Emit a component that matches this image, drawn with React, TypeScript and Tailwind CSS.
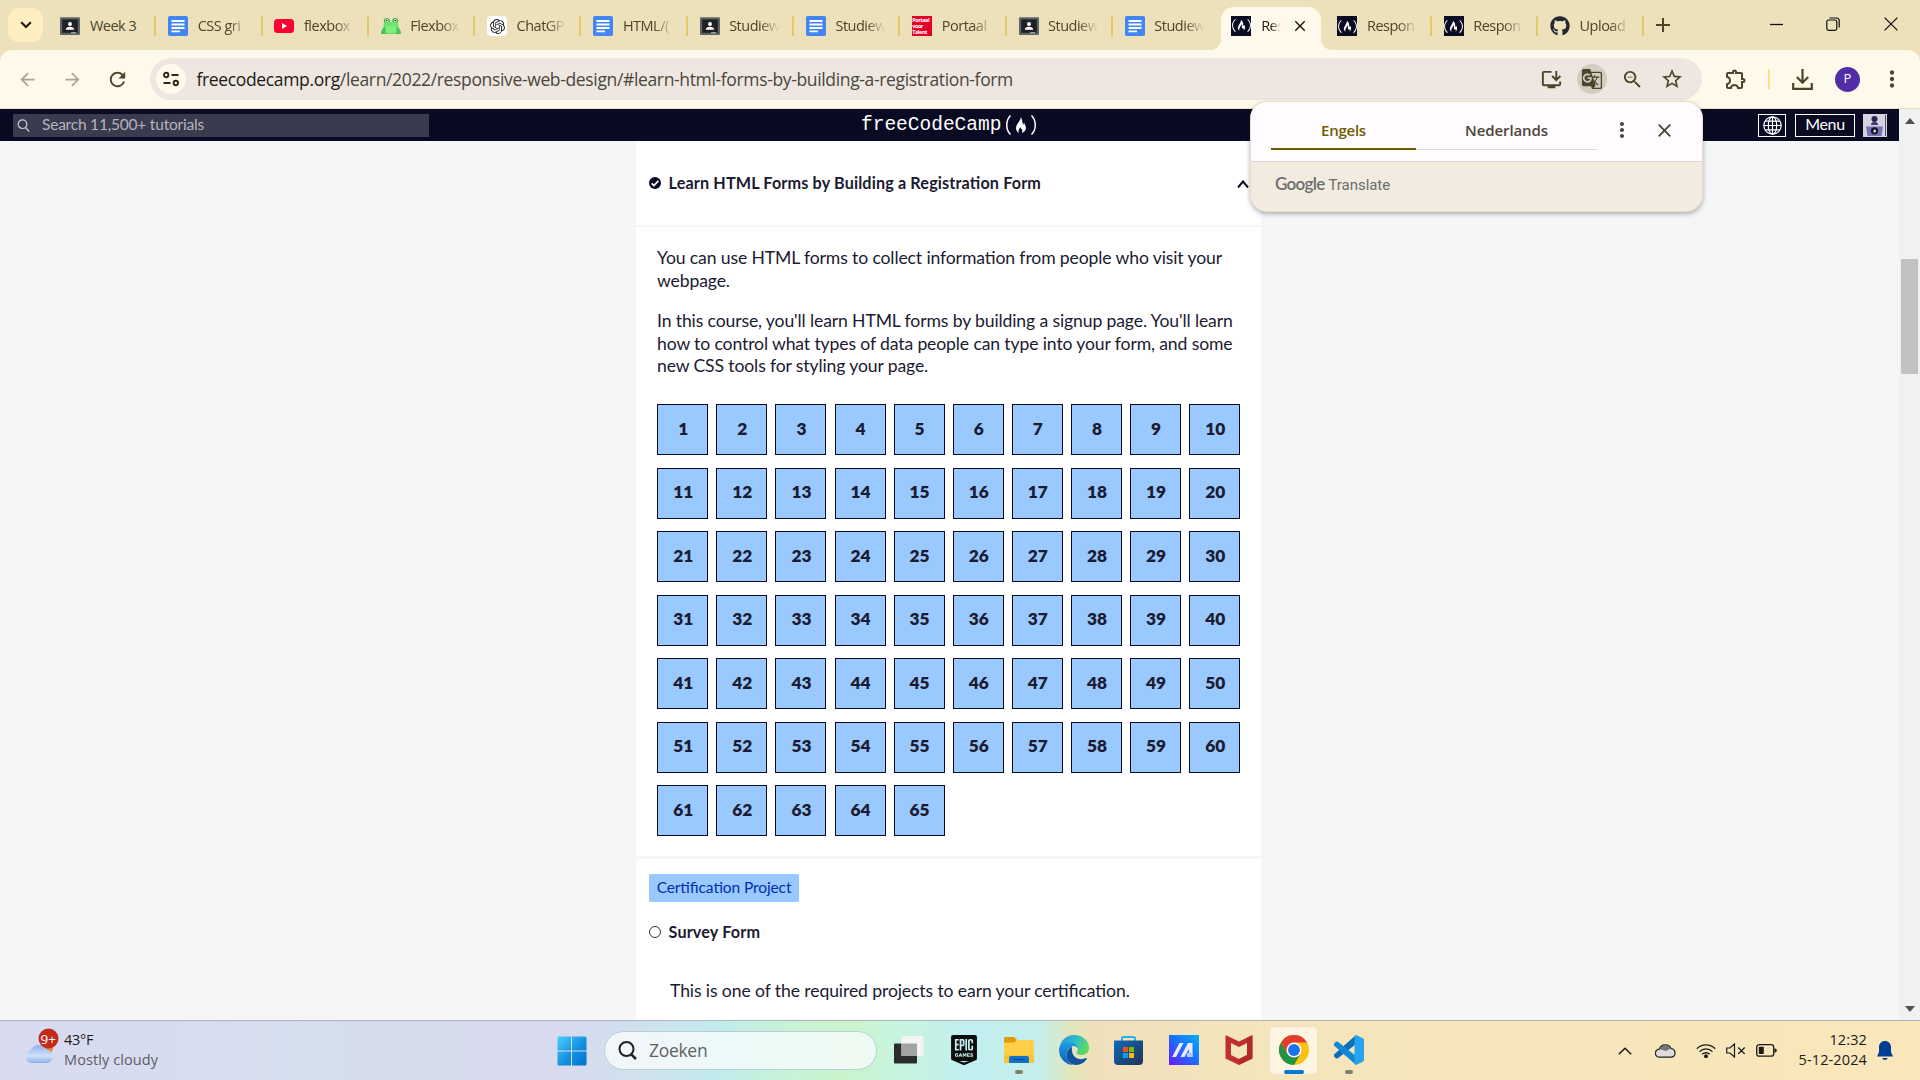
import React from "react";
import { FaFreeCodeCamp, FaGithub, FaYoutube } from "react-icons/fa";
import { SiEpicgames, SiOpenai } from "react-icons/si";
import {
  MdArrowBack,
  MdArrowForward,
  MdClose,
  MdGTranslate,
  MdInstallDesktop,
  MdMoreVert,
  MdOutlineExtension,
  MdRefresh,
  MdStarOutline,
  MdZoomOut,
} from "react-icons/md";

const UI = "font-['Open_Sans','Noto_Sans',sans-serif]";

function Classroom() {
  return (
    <svg width="20" height="20" viewBox="0 0 20 20">
      <rect x="0" y="1.3" width="20" height="17.6" rx="1" fill="#5f6368" />
      <rect x="2.2" y="3.4" width="15.6" height="13.4" fill="#202124" />
      <circle cx="10" cy="8" r="2" fill="#fff" />
      <path d="M5.8 13.8c0-2.2 2-3 4.200-3s4.200.8 4.200 3z" fill="#fff" />
      <rect x="11" y="16" width="5" height="1.500" fill="#9aa0a6" />
    </svg>
  );
}

function Docs() {
  return (
    <svg width="20" height="20" viewBox="0 0 20 20">
      <rect width="20" height="20" rx="1.800" fill="#4285f4" />
      <path d="M3.500 5h13M3.500 8.500h13M3.500 12h13M3.500 15.400h8.500" stroke="#fff" strokeWidth="1.800" />
    </svg>
  );
}

function Frog() {
  return (
    <svg width="20" height="20" viewBox="0 0 20 20">
      <circle cx="5.800" cy="5" r="3" fill="#3fae49" />
      <circle cx="14.200" cy="5" r="3" fill="#3fae49" />
      <circle cx="5.800" cy="4.600" r="1.500" fill="#fff" />
      <circle cx="14.200" cy="4.600" r="1.500" fill="#fff" />
      <circle cx="5.800" cy="4.600" r=".8" fill="#222" />
      <circle cx="14.200" cy="4.600" r=".8" fill="#222" />
      <rect x="2.500" y="5.800" width="15" height="8" rx="3.500" fill="#6fe36f" />
      <path d="M0 18c0-4 2-6.500 4-7l12 0c2 .5 4 3 4 7z" fill="#4cc356" />
      <rect x="4.500" y="10" width="11" height="7.500" rx="2" fill="#7bf07a" />
    </svg>
  );
}

function Fcc() {
  return (
    <div className="flex size-5 items-center justify-center bg-[#0a0a23] text-white">
      <FaFreeCodeCamp size={19} />
    </div>
  );
}

function Portaal() {
  return (
    <div className="flex size-5 flex-col justify-center bg-[#e4002b] font-['Open_Sans',sans-serif] text-[5.500px] leading-[6px] font-bold tracking-[-0.450px] text-white">
      <span>Portaal</span>
      <span>voor</span>
      <span>Talent</span>
    </div>
  );
}

function Youtube() {
  return (
    <svg width="20" height="20" viewBox="0 0 20 20">
      <rect y="3" width="20" height="14" rx="3.500" fill="#ff0033" />
      <path d="M8 7v6l5-3z" fill="#fff" />
    </svg>
  );
}

function Gpt() {
  return (
    <div className="flex size-5 items-center justify-center rounded bg-white text-[#222]">
      <SiOpenai size={15} />
    </div>
  );
}

type TabInfo = { icon: React.ReactNode; label: string; active?: boolean; first?: boolean; sep?: boolean };

const tabs: TabInfo[] = [
  { icon: <Classroom />, label: "Week 3", first: true, sep: true },
  { icon: <Docs />, label: "CSS gri", sep: true },
  { icon: <Youtube />, label: "flexbox", sep: true },
  { icon: <Frog />, label: "Flexbox", sep: true },
  { icon: <Gpt />, label: "ChatGP", sep: true },
  { icon: <Docs />, label: "HTML/(", sep: true },
  { icon: <Classroom />, label: "Studiew", sep: true },
  { icon: <Docs />, label: "Studiew", sep: true },
  { icon: <Portaal />, label: "Portaal", sep: true },
  { icon: <Classroom />, label: "Studiew", sep: true },
  { icon: <Docs />, label: "Studiew" },
  { icon: <Fcc />, label: "Res", active: true },
  { icon: <Fcc />, label: "Respon", sep: true },
  { icon: <Fcc />, label: "Respon", sep: true },
  { icon: <FaGithub size={20} color="#24292f" />, label: "Upload", sep: true },
];

function Tab({ tab }: { tab: TabInfo }) {
  if (tab.active) {
    return (
      <div className="relative z-10 flex h-[43px] w-[106.300px] shrink-0 items-center">
        <div className="absolute top-0 -left-[3px] h-[44px] w-[100px] rounded-t-[13px] bg-[#fff9ec]" />
        <div className="absolute bottom-0 -left-[15px] h-3 w-3 bg-[radial-gradient(circle_at_0_0,transparent_12px,#fff9ec_12.500px)]" />
        <div className="absolute bottom-0 left-[97px] h-3 w-3 bg-[radial-gradient(circle_at_100%_0,transparent_12px,#fff9ec_12.500px)]" />
        <div className="relative flex items-center pb-[6px] pl-[7px]">
          {tab.icon}
          <span className="ml-2.5 w-[20px] whitespace-nowrap text-[#1f1c10] [mask-image:linear-gradient(to_right,#000_50%,transparent)]">
            {tab.label}
          </span>
          <MdClose size={18} className="ml-[10px] text-[#1f1c10]" />
        </div>
      </div>
    );
  }
  return (
    <div className={`flex h-[43px] w-[106.300px] shrink-0 items-center pb-[5px] ${tab.first ? "pl-[5px]" : "pl-[7px]"}`}>
      {tab.icon}
      <span
        className={
          tab.first
            ? "ml-2.5 w-[51.400px] whitespace-nowrap text-[#4b4629]"
            : "ml-[9.500px] w-[49.900px] whitespace-nowrap text-[#4b4629] [mask-image:linear-gradient(to_right,#000_62%,transparent)]"
        }
      >
        {tab.label}
      </span>
      {tab.sep && <div className="ml-[13px] h-5 w-[2px] rounded bg-[#e2c869]" />}
    </div>
  );
}

function TabStrip() {
  return (
    <div className={`flex h-[50px] items-start bg-[#ece1bb] pt-[7px] text-[14.500px] tracking-[-0.500px] ${UI}`}>
      <div className="mt-px ml-2 flex h-[34px] w-[35px] shrink-0 items-center justify-center rounded-[11px] bg-[#ffefc0]">
        <svg width="12" height="8" viewBox="0 0 12 8" fill="none" stroke="#1f1c10" strokeWidth="2.200">
          <path d="M1.200 1.200 6 6l4.800-4.800" />
        </svg>
      </div>
      <div className="ml-[11.900px] flex">
        {tabs.map((t, i) => (
          <Tab key={i} tab={t} />
        ))}
      </div>
      <svg className="mt-[11px] ml-[7.100px] shrink-0" width="14" height="14" viewBox="0 0 14 14" stroke="#4b4629" strokeWidth="2">
        <path d="M7 0v14M0 7h14" />
      </svg>
      <div className="mt-[10px] mr-[22px] ml-auto flex items-center">
        <svg width="14" height="14" viewBox="0 0 14 14" stroke="#111" strokeWidth="1.300">
          <path d="M0 7.500h13" />
        </svg>
        <svg className="ml-[42px]" width="14" height="14" viewBox="0 0 14 14" fill="none" stroke="#111" strokeWidth="1.200">
          <rect x=".8" y="3" width="10" height="10.300" rx="1.800" />
          <path d="M3.500 1h7a2.500 2.500 0 0 1 2.700 2.500v7" />
        </svg>
        <svg className="ml-[44px]" width="14" height="14" viewBox="0 0 14 14" stroke="#111" strokeWidth="1.300">
          <path d="M.6.600l12.800 12.800M13.400.6.600 13.400" />
        </svg>
      </div>
    </div>
  );
}

function AddressBar() {
  return (
    <div className="bg-[#ece1bb]">
      <div className="flex h-[59px] items-center rounded-t-[12px] border-b border-[#e4dfc9] bg-[#fff9ec]">
        <MdArrowBack size={21} className="ml-[17px] shrink-0 text-[#aaa597]" />
        <MdArrowForward size={21} className="ml-[24px] shrink-0 text-[#aaa597]" />
        <MdRefresh size={23} className="ml-[23px] shrink-0 text-[#4b4629]" />
        <div className="ml-[21px] flex h-[42px] w-[1552px] shrink-0 items-center rounded-full bg-[#eee6e0]">
          <div className="ml-[6px] flex size-[30px] shrink-0 items-center justify-center rounded-full bg-[#fff9ec]">
            <svg width="16" height="16" viewBox="0 0 16 16" fill="none" stroke="#2b2818" strokeWidth="1.900">
              <circle cx="3.200" cy="4" r="2.200" />
              <path d="M8.500 4h7M.5 12h7" />
              <circle cx="12.800" cy="12" r="2.200" />
            </svg>
          </div>
          <div className={`ml-[10.500px] text-[17.500px] tracking-[-0.350px] whitespace-nowrap text-[#4a473c] ${UI}`}>
            <span className="text-[#1c1b16]">freecodecamp.org</span>
            /learn/2022/responsive-web-design/#learn-html-forms-by-building-a-registration-form
          </div>
          <div className="mr-[18px] ml-auto flex items-center text-[#4b4629]">
            <MdInstallDesktop size={23} />
            <div className="ml-[14px] flex size-[30px] items-center justify-center rounded-full bg-[#d3ccc0]">
              <MdGTranslate size={22} />
            </div>
            <MdZoomOut size={23} className="ml-[14px]" />
            <MdStarOutline size={24} className="ml-[16px]" />
          </div>
        </div>
        <MdOutlineExtension size={24} className="ml-[22px] shrink-0 text-[#4b4629]" />
        <div className="ml-[20px] h-5 w-[2px] bg-[#f8e287]" />
        <svg className="ml-[22px] shrink-0" width="21" height="21" viewBox="0 0 21 21" fill="none" stroke="#4b4629" strokeWidth="2.200">
          <path d="M10.500 0v13.500M4.800 8l5.700 5.700L16.200 8M1.200 14v5.800h18.600V14" />
        </svg>
        <div className={`ml-[22px] flex size-[25px] shrink-0 items-center justify-center rounded-full bg-[#512da8] text-[13px] text-white ${UI}`}>
          P
        </div>
        <MdMoreVert size={26} className="ml-[19px] shrink-0 text-[#4b4629]" />
      </div>
    </div>
  );
}

function SiteNav() {
  return (
    <div className="flex h-8 w-[1899px] items-center bg-[#0a0a23] font-[Lato,sans-serif]">
      <div className="ml-[13px] flex h-[23px] w-[416px] shrink-0 items-center bg-[#3b3b4f]">
        <svg className="ml-1" width="13" height="13" viewBox="0 0 13 13" fill="none" stroke="#d0d0d5" strokeWidth="1.200">
          <circle cx="5.500" cy="5.200" r="4.300" />
          <path d="m8.500 8.500 3.600 4" />
        </svg>
        <span className="ml-[12px] text-[15.500px] tracking-[-0.210px] text-[#b5b5bd]">Search 11,500+ tutorials</span>
      </div>
      <div className="ml-[432px] flex h-8 w-[180px] shrink-0 items-center text-white">
        <span className="mt-px font-['Liberation_Mono',monospace] text-[19.500px] leading-none">freeCodeCamp</span>
        <svg width="38" height="22" viewBox="0 0 38 22" fill="none" stroke="#fff" strokeWidth="1.500" className="shrink-0">
          <path d="M9.500 1.500C4.500 6.500 4.500 15.500 9.500 20.500M30.500 1.500C35.500 6.500 35.500 15.500 30.500 20.500" />
          <path
            d="M19.500 3c1 3-4.500 7-4.500 11 0 2.500 1.500 4.200 3.200 5-1.500-2.500 0-4.500 1.400-5.800 0 1.500 1 1.700 1.500 2.600.5.900.2 2.200-.3 3.200 2-.7 4.200-2.500 4.200-5.100 0-2.300-1.500-3.300-1.800-5.200-.7.600-.8 1.300-.7 2.200C21 9.500 22 6 19.500 3z"
            fill="#fff"
            stroke="none"
          />
        </svg>
      </div>
      <div className="mr-[12px] ml-auto flex h-[23px] items-stretch">
        <div className="flex w-[28px] items-center justify-center border border-white">
          <svg width="19" height="19" viewBox="0 0 19 19" fill="none" stroke="#fff" strokeWidth="1.200">
            <circle cx="9.500" cy="9.500" r="8.700" />
            <ellipse cx="9.500" cy="9.500" rx="4.200" ry="8.700" />
            <path d="M9.500 1v17M1 9.500h17M2.200 5.200h14.600M2.200 13.800h14.600" />
          </svg>
        </div>
        <div className="ml-[9px] flex w-[60px] items-center justify-center border border-white pb-[2px] text-[16px] leading-none tracking-[-0.300px] text-white">
          Menu
        </div>
        <div className="ml-2 w-6 bg-[#d6d2e0]">
          <svg width="24" height="23" viewBox="0 0 24 23">
            <circle cx="11.500" cy="5" r="3" fill="#26264d" />
            <path d="M8 11c0-2 1-3 3.500-3s3.500 1 3.500 3z" fill="#3b3b6b" />
            <path d="M3 12.500h17l-1.500 9.500H4.500z" fill="#7472b3" />
            <circle cx="11.500" cy="16.800" r="3.600" fill="#15152f" />
            <path d="M10.300 18.300c0-1.500 1.200-1.700 1.200-3.200 1.300 1 1.400 2.200 1.200 3.200z" fill="#fff" />
            <path d="M22.500 1v21" stroke="#55506b" />
          </svg>
        </div>
      </div>
    </div>
  );
}

function Steps() {
  return (
    <div className="mt-[26.800px] ml-[21.200px] grid grid-cols-[repeat(10,51px)] gap-x-[8.120px] gap-y-[12.500px]">
      {Array.from({ length: 65 }, (_, i) => (
        <div
          key={i}
          className="flex h-[51px] items-center justify-center border border-[#0a0a23] bg-[#99c9ff] pb-[2px] pl-px text-[17.300px] font-extrabold text-[#1b1b32]"
        >
          {i + 1}
        </div>
      ))}
    </div>
  );
}

function Content() {
  return (
    <div className="flex h-[879px] w-[1899px] justify-center overflow-hidden bg-[#f5f6f7] pr-[2px] font-[Lato,sans-serif] text-[#1b1b32] [font-feature-settings:'liga']">
      <div className="w-[625px]">
        <div className="h-[715px] bg-white">
          <div className="flex h-[86px] items-center border-b-2 border-[#f5f6f7] pr-[12px] pl-[13px]">
            <svg width="12" height="12" viewBox="0 0 12 12">
              <circle cx="6" cy="6" r="6" fill="#0a0a23" />
              <path d="m2.600 6.300 2.300 2.200 4.500-4.600" stroke="#fff" strokeWidth="1.700" fill="none" />
            </svg>
            <span className="ml-[7.500px] text-[16.200px] font-bold tracking-[0.140px] whitespace-nowrap">
              Learn HTML Forms by Building a Registration Form
            </span>
            <svg className="mt-[2px] ml-auto" width="12" height="8" viewBox="0 0 12 8" fill="none" stroke="#0a0a23" strokeWidth="2">
              <path d="M1 7.500 6 1.500l5 6" />
            </svg>
          </div>
          <div className="mt-[20px] ml-[21px] text-[17.600px] leading-[22.500px] tracking-[-0.130px] whitespace-nowrap">
            <p>
              You can use HTML forms to collect information from people who visit your
              <br />
              webpage.
            </p>
            <p className="mt-[18px]">
              In this course, you'll learn HTML forms by building a signup page. You'll learn
              <br />
              how to control what types of data people can type into your form, and some
              <br />
              new CSS tools for styling your page.
            </p>
          </div>
          <Steps />
        </div>
        <div className="mt-[3px] h-[200px] bg-white pt-[15px]">
          <div className="ml-[13px] flex h-[28px] w-[150px] items-center justify-center bg-[#99c9ff] text-[15.500px] tracking-[-0.100px] whitespace-nowrap text-[#002ead]">
            Certification Project
          </div>
          <div className="mt-[19px] ml-[13px] flex items-center">
            <svg width="12" height="12" viewBox="0 0 12 12" fill="none">
              <circle cx="6" cy="6" r="5.500" stroke="#1b1b32" strokeWidth=".9" />
            </svg>
            <span className="ml-[7.500px] text-[16.200px] leading-[22px] font-bold tracking-[0.150px]">Survey Form</span>
          </div>
          <p className="mt-[36px] ml-[34px] text-[17.600px] leading-[24px] tracking-[-0.110px] whitespace-nowrap">
            This is one of the required projects to earn your certification.
          </p>
        </div>
      </div>
    </div>
  );
}

function Scrollbar() {
  return (
    <div className="flex w-[21px] flex-col items-center bg-[#f1f1f1]">
      <svg className="mt-[9px]" width="10" height="6" viewBox="0 0 10 6">
        <path d="M0 6h10L5 0z" fill="#505050" />
      </svg>
      <div className="mt-[135px] h-[115px] w-[17px] bg-[#c1c1c1]" />
      <svg className="mt-auto mb-[8px]" width="10" height="6" viewBox="0 0 10 6">
        <path d="M0 0h10L5 6z" fill="#505050" />
      </svg>
    </div>
  );
}

function TranslatePopup() {
  return (
    <div className={`absolute top-[101px] left-[1250px] h-[111px] w-[453px] overflow-hidden rounded-[17px] border border-[#e6e0cf] bg-[#f3ebdf] shadow-[0_2px_5px_rgba(0,0,0,0.3)] ${UI}`}>
      <div className="flex h-[60px] border-b border-[#d9d5d0] bg-[#fffbff] pl-5">
        <div className="flex h-[48px] w-[145px] items-center justify-center border-b-2 border-[#6d5e00] pt-[10px] text-[15px] font-semibold tracking-[-0.250px] text-[#6d5e00]">
          Engels
        </div>
        <div className="flex h-[48px] w-[181px] items-center justify-center border-b border-[#dcd8dc] pt-[9px] text-[15px] font-semibold tracking-[-0.100px] text-[#4b4639]">
          Nederlands
        </div>
        <MdMoreVert size={24} className="mt-[16px] ml-[13px] text-[#4b4639]" />
        <svg className="mt-[22px] ml-[24px]" width="13" height="13" viewBox="0 0 13 13" stroke="#4b4639" strokeWidth="1.900">
          <path d="m.7.700 11.600 11.600M12.300.7.700 12.300" />
        </svg>
      </div>
      <div className="mt-[9px] ml-[24px] flex items-baseline gap-[4px] text-[#6b6d70]">
        <span className="font-[Lato,sans-serif] text-[17px] font-semibold tracking-[-0.700px]">Google</span>
        <span className="font-[Roboto,sans-serif] text-[15px] tracking-[-0.050px]">Translate</span>
      </div>
    </div>
  );
}

function Weather() {
  return (
    <div className="ml-[25px] flex w-[240px]">
      <svg className="mt-[7px]" width="36" height="38" viewBox="0 0 36 38">
        <defs>
          <linearGradient id="cloud" x1="0" y1="0" x2="0" y2="1">
            <stop offset="0" stopColor="#8fb0ee" />
            <stop offset=".6" stopColor="#cfe2fb" />
            <stop offset="1" stopColor="#8faeea" />
          </linearGradient>
        </defs>
        <circle cx="22" cy="20" r="6" fill="#f08a24" />
        <path d="M6 35a6.500 6.500 0 0 1-.5-12.500A9 9 0 0 1 21.500 21.500 7 7 0 0 1 23 35z" fill="url(#cloud)" />
        <circle cx="23.500" cy="10.500" r="10" fill="#c42b1c" />
        <text x="23.300" y="15.500" textAnchor="middle" fontFamily="Open Sans" fontSize="13.500" fill="#fff">
          9+
        </text>
      </svg>
      <div className={`mt-[9px] ml-[3px] text-[14.500px] leading-5 ${UI}`}>
        <div className="tracking-[-0.300px] text-[#1b1b1b]">43°F</div>
        <div className="tracking-[0.100px] text-[#5a5c66]">Mostly cloudy</div>
      </div>
    </div>
  );
}

function StartLogo() {
  return (
    <svg width="30" height="30" viewBox="0 0 30 30">
      <defs>
        <linearGradient id="win" x1="0" y1="0" x2="1" y2="1">
          <stop offset="0" stopColor="#4ccfff" />
          <stop offset=".55" stopColor="#1390df" />
          <stop offset="1" stopColor="#006fd0" />
        </linearGradient>
      </defs>
      <path d="M1.500.5H14v14H.5v-13zM15 .5h13.500l1 1v13H15zM.5 15.500H14v14H1.500l-1-1zM15 15.500h14.500v13l-1 1H15z" fill="url(#win)" />
    </svg>
  );
}

function TaskView() {
  return (
    <svg width="30" height="30" viewBox="0 0 30 30">
      <rect x="0" y="8.500" width="23" height="20" rx="1" fill="#2c2c2c" />
      <rect x="7.500" y="1" width="22" height="20" rx="1" fill="#f4f4f4" />
      <rect x="7.500" y="8.500" width="15.500" height="12.500" fill="#a3a3a3" />
    </svg>
  );
}

function Explorer() {
  return (
    <svg width="30" height="30" viewBox="0 0 30 30">
      <path d="M0 3.500Q0 2 1.500 2H10l3 3h0v6H0z" fill="#dd9b06" />
      <path d="M0 7.500h10L13 5h15.500Q30 5 30 6.500v21.500H0z" fill="#ffcf48" />
      <path d="M0 20h30v8H0z" fill="#f9bd2c" opacity=".6" />
      <path d="M5 28v-5q0-2 2-2h16q2 0 2 2v5z" fill="#1173c7" />
      <path d="M9 24.500h12" stroke="#0a4b8c" strokeWidth="1.200" />
    </svg>
  );
}

function Edge() {
  return (
    <svg width="30" height="30" viewBox="0 0 30 30">
      <defs>
        <linearGradient id="edgeTop" x1="0" y1="0.200" x2="1" y2="0.600">
          <stop offset="0" stopColor="#2493e0" />
          <stop offset=".5" stopColor="#30bcc9" />
          <stop offset="1" stopColor="#62dc55" />
        </linearGradient>
        <linearGradient id="edgeLeft" x1="0" y1="0" x2="0" y2="1">
          <stop offset="0" stopColor="#1f9de5" />
          <stop offset="1" stopColor="#0a5fb8" />
        </linearGradient>
      </defs>
      <path d="M.5 13C1.500 5.500 7.500 0 15 0c9 0 15 6 15 13 0 5-4 7-7.500 7-3.500 0-5-1.500-5-2.500 0-.7 1.300-1.200 1.300-3.500 0-3-3.300-6-8-6C6.500 8 2.500 9.500.5 13z" fill="url(#edgeTop)" />
      <path d="M0 15c0-5 4-8 10-8 5 0 8.500 3 8.800 6.500C17.500 11.500 15 10.500 13 11.500c-3.500 1.500-5.500 5-5.500 9 0 4 2.500 7.500 6 9.400C6 29.500 0 23 0 15z" fill="url(#edgeLeft)" />
      <path d="M13 11.500c-3.500 2-5.500 5-5.500 9 0 5 4 9.500 9.500 9.400 4.500-.2 8.500-2.500 10.700-6 .4-.7-.2-1.100-.8-.8-6 2.900-15.500 0-13.900-11.600z" fill="#10529f" />
    </svg>
  );
}

function Store() {
  return (
    <svg width="30" height="30" viewBox="0 0 30 30">
      <defs>
        <linearGradient id="bag" x1="0" y1="0" x2="1" y2="1">
          <stop offset="0" stopColor="#0e6bb8" />
          <stop offset="1" stopColor="#243058" />
        </linearGradient>
      </defs>
      <path d="M8 7V3.500Q8 2 9.500 2h10Q21 2 21 3.500V7" stroke="#22b1ea" strokeWidth="2" fill="none" />
      <path d="M0 5.500h29V26q0 4-4 4H4q-4 0-4-4z" fill="url(#bag)" />
      <rect x="9" y="12" width="5" height="5" fill="#f25022" />
      <rect x="15" y="12" width="5" height="5" fill="#7fba00" />
      <rect x="9" y="18" width="5" height="5" fill="#00a4ef" />
      <rect x="15" y="18" width="5" height="5" fill="#ffb900" />
    </svg>
  );
}

function MyAsus() {
  return (
    <svg width="30" height="30" viewBox="0 0 30 30">
      <defs>
        <linearGradient id="asus" x1="0" y1="1" x2="1" y2="0">
          <stop offset="0" stopColor="#6a17ff" />
          <stop offset=".5" stopColor="#1f6bff" />
          <stop offset="1" stopColor="#00b0ff" />
        </linearGradient>
      </defs>
      <rect width="30" height="30" fill="url(#asus)" />
      <path d="M3 22 10.500 8h4L7 22zM11.500 22 19 8h4.500v14H20v-8l-4.500 8z" fill="#e9e9ff" />
      <path d="M18 22v-4h5.500v4z" fill="#b9c8ff" />
    </svg>
  );
}

function McAfee() {
  return (
    <svg width="30" height="30" viewBox="0 0 30 30">
      <path d="M1.500 0 15 6.500 28.500 0v23.500L15 30 1.500 23.500zM7 8v12l8 4 8-4V8l-8 4z" fillRule="evenodd" fill="#c02f30" />
      <path d="M23 2.600 28.500 0v23.500L15 30v-6l8-4z" fill="#a82426" opacity=".55" />
    </svg>
  );
}

function Chrome() {
  return (
    <svg width="30" height="30" viewBox="0 0 48 48">
      <circle cx="24" cy="24" r="24" fill="#fbc116" />
      <path d="M3.200 12 13.600 30 24 24l10.400 6L24 48A24 24 0 0 1 3.200 12z" fill="#229342" />
      <path d="M3.200 12A24 24 0 0 1 44.800 12H24v12l-10.400 6z" fill="#e33b2e" />
      <circle cx="24" cy="24" r="12" fill="#fff" />
      <circle cx="24" cy="24" r="9.500" fill="#1a73e8" />
    </svg>
  );
}

function VsCode() {
  return (
    <svg width="30" height="30" viewBox="0 0 30 30">
      <path d="M22 0 0 19.500v2L2 23.200q1 .6 2 0L22 9z" fill="#0b6fba" />
      <path d="M22 30 0 10.500v-2L2 6.800q1-.6 2 0L22 21z" fill="#1287d4" />
      <path d="M22 0l7 3.200q1 .6 1 1.800v20q0 1.200-1 1.800L22 30q-1.500-.5-1.500-2V2q0-1.500 1.500-2z" fill="#27a3ef" />
    </svg>
  );
}

const apps: { icon: React.ReactNode; mark?: "open" | "focus" }[] = [
  { icon: <TaskView /> },
  { icon: <SiEpicgames size={30} color="#0b0b0b" /> },
  { icon: <Explorer />, mark: "open" },
  { icon: <Edge /> },
  { icon: <Store /> },
  { icon: <MyAsus /> },
  { icon: <McAfee /> },
  { icon: <Chrome />, mark: "focus" },
  { icon: <VsCode />, mark: "open" },
];

function Taskbar() {
  return (
    <div className="flex h-[60px] border-t border-[#b0b2b8] bg-[linear-gradient(90deg,#d8dbef_0px,#d8dcef_180px,#d5dfee_310px,#d6dcec_400px,#d8daee_560px,#cfe2ee_650px,#c0ecec_720px,#c8f3d6_790px,#caf4cc_850px,#c8f5dc_890px,#c1eff0_970px,#c5eeea_1040px,#e6e5b8_1075px,#f0e0bd_1100px,#f5e5bc_1250px,#fae7bb_1920px)]">
      <Weather />
      <div className="mt-[15px] ml-[292px]">
        <StartLogo />
      </div>
      <div className={`mt-[10px] ml-[17px] flex h-[39px] w-[273px] items-center rounded-full border border-[#b8d0d4] bg-[#f7fbfd]/80 text-[17.500px] text-[#5e6463] ${UI}`}>
        <svg className="ml-[13px]" width="19" height="19" viewBox="0 0 19 19" fill="none" stroke="#222" strokeWidth="2">
          <circle cx="8.500" cy="8" r="7" />
          <path d="m13.300 13.300 4.700 4.700" strokeWidth="2.600" />
        </svg>
        <span className="ml-[12px] tracking-[-0.300px]">Zoeken</span>
      </div>
      <div className="ml-[4px] flex">
        {apps.map((a, i) => (
          <div key={i} className="flex w-[55px] justify-center pt-[5px]">
            <div
              className={
                a.mark === "focus"
                  ? "flex h-[49px] w-[49px] flex-col items-center rounded-[5px] border border-[#efe3c8] bg-[#fdf4e1] pt-[8px]"
                  : "flex h-[49px] w-[49px] flex-col items-center pt-[9px]"
              }
            >
              {a.icon}
              {a.mark === "open" && <div className="mt-[5px] h-1 w-2 rounded-full bg-[#858070]" />}
              {a.mark === "focus" && <div className="mt-[5px] h-1 w-5 rounded-full bg-[#0078d4]" />}
            </div>
          </div>
        ))}
      </div>
      <div className="ml-auto flex h-[59px] items-center text-[#1b1b1b]">
        <svg width="14" height="8" viewBox="0 0 14 8" fill="none" stroke="currentColor" strokeWidth="1.600">
          <path d="m.8 7.300 6.200-6 6.200 6" />
        </svg>
        <svg className="ml-[23px]" width="21" height="15" viewBox="0 0 21 15">
          <path d="M4.500 14.200a4 4 0 0 1-.3-8 6.500 6.500 0 0 1 12-.5 4.300 4.300 0 0 1 .3 8.500z" fill="#ddd" stroke="#222" strokeWidth="1.200" />
          <path d="M4.500 6.200a6.300 6.300 0 0 1 11.300-.6L11 8z" fill="#777" />
        </svg>
        <svg className="ml-[20px]" width="20" height="15" viewBox="0 0 20 15" fill="none" stroke="currentColor" strokeWidth="1.300">
          <path d="M.8 5.700a13 13 0 0 1 18.400 0M3.500 8.600a9.200 9.200 0 0 1 13 0M6.200 11.300a5.400 5.400 0 0 1 7.600 0" />
          <circle cx="10" cy="13.300" r="1.300" fill="currentColor" />
        </svg>
        <svg className="ml-[10px]" width="20" height="15" viewBox="0 0 20 15" fill="none" stroke="currentColor" strokeWidth="1.200">
          <path d="M.7 5v5H4l4.500 4V1L4 5zM12.200 4.500l6.500 6.500M18.700 4.500 12.200 11" />
        </svg>
        <svg className="ml-[10px]" width="21" height="13" viewBox="0 0 21 13">
          <rect x=".7" y=".7" width="17" height="11.500" rx="2.500" fill="none" stroke="#1b1b1b" strokeWidth="1.300" />
          <rect x="2.800" y="2.800" width="5" height="7.300" rx=".8" fill="#1b1b1b" />
          <path d="M18.500 4v5l2.200-1.500v-2z" fill="#1b1b1b" />
        </svg>
        <div className={`ml-[10px] w-[80px] pb-[2px] text-right text-[14.500px] leading-5 tracking-[0.120px] ${UI}`}>
          <div>12:32</div>
          <div>5-12-2024</div>
        </div>
        <svg className="mr-[27px] ml-[10px]" width="16" height="19" viewBox="0 0 16 19" fill="#003e92">
          <path d="M8 0c3.500 0 6 2.700 6 6v5l2 4.500H0L2 11V6c0-3.300 2.500-6 6-6zM5.200 17h5.600c-.5 1.200-1.500 2-2.800 2s-2.300-.8-2.800-2z" />
        </svg>
      </div>
    </div>
  );
}

export default function App() {
  return (
    <div className="relative flex h-[1080px] w-[1920px] flex-col overflow-hidden bg-[#f5f6f7]">
      <TabStrip />
      <AddressBar />
      <div className="flex h-[911px]">
        <div className="flex w-[1899px] flex-col">
          <SiteNav />
          <Content />
        </div>
        <Scrollbar />
      </div>
      <Taskbar />
      <TranslatePopup />
    </div>
  );
}
